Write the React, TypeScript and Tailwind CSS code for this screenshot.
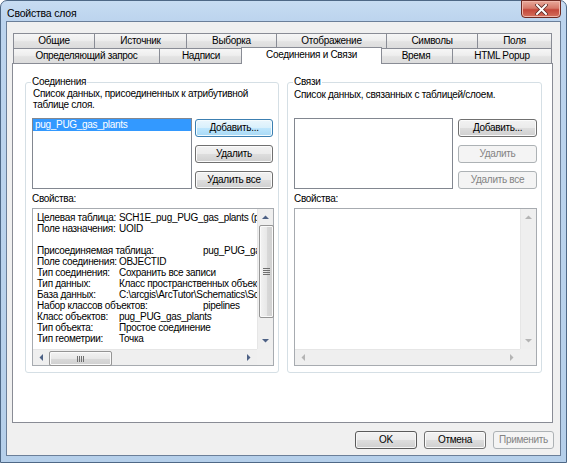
import React from "react";

type BtnKind = "normal" | "focus" | "disabled" | "default";

function Btn({ label, kind = "normal", w }: { label: string; kind?: BtnKind; w: string }) {
  let cls =
    "h-[18px] shrink-0 rounded-[3px] border flex items-center justify-center leading-[12px] ";
  if (kind === "normal")
    cls +=
      "border-[#707070] text-black bg-[linear-gradient(to_bottom,#f2f2f2_0%,#ebebeb_48%,#dddddd_52%,#cfcfcf_100%)] shadow-[inset_0_0_0_1px_#fbfbfb]";
  if (kind === "default")
    cls +=
      "border-[#5a5a5a] text-black bg-[linear-gradient(to_bottom,#f2f2f2_0%,#ebebeb_48%,#dddddd_52%,#cfcfcf_100%)] shadow-[inset_0_0_0_1px_#f6f6f6]";
  if (kind === "focus")
    cls +=
      "border-[#3c7fb1] text-black bg-[linear-gradient(to_bottom,#eaf6fd_0%,#d9f0fc_48%,#bee6fd_52%,#a7d9f5_100%)] shadow-[inset_0_0_0_1px_#f4fbfe]";
  if (kind === "disabled")
    cls += "border-[#adb2b5] text-[#838383] bg-[#f4f4f4]";
  return <div className={cls + " " + w}>{label}</div>;
}

function Arrow({ dir, disabled }: { dir: "up" | "down" | "left" | "right"; disabled?: boolean }) {
  const c = disabled ? "#b4b4b4" : "#4d6185";
  const pts =
    dir === "up"
      ? "0,4 3.5,0.5 7,4"
      : dir === "down"
      ? "0,0 3.5,3.5 7,0"
      : dir === "left"
      ? "4,0 0.5,3.5 4,7"
      : "0,0 3.5,3.5 0,7";
  const vert = dir === "up" || dir === "down";
  return (
    <svg width={vert ? 7 : 4} height={vert ? 4 : 7} viewBox={vert ? "0 0 7 4" : "0 0 4 7"}>
      <polygon points={pts} fill={c} />
    </svg>
  );
}

function VThumb() {
  return (
    <div className="w-[15px] h-[93px] ml-[1px] rounded-[2px] border border-[#959595] bg-[linear-gradient(to_right,#f3f3f3_0%,#e8e8e8_50%,#d9d9d9_51%,#d0d0d0_100%)] shadow-[inset_0_0_0_1px_#fafafa] flex items-center justify-center">
      <svg width="7" height="7" viewBox="0 0 7 7">
        <rect x="0" y="0" width="7" height="1" fill="#6f6f6f" />
        <rect x="0" y="2" width="7" height="1" fill="#6f6f6f" />
        <rect x="0" y="4" width="7" height="1" fill="#6f6f6f" />
        <rect x="0" y="6" width="7" height="1" fill="#6f6f6f" />
      </svg>
    </div>
  );
}

function HThumb() {
  return (
    <div className="w-[63px] h-[15px] mt-[1px] rounded-[2px] border border-[#959595] bg-[linear-gradient(to_bottom,#f3f3f3_0%,#e8e8e8_50%,#d9d9d9_51%,#d0d0d0_100%)] shadow-[inset_0_0_0_1px_#fafafa] flex items-center justify-center">
      <svg width="7" height="6" viewBox="0 0 7 6">
        <rect x="0" y="0" width="1" height="6" fill="#6f6f6f" />
        <rect x="2" y="0" width="1" height="6" fill="#6f6f6f" />
        <rect x="4" y="0" width="1" height="6" fill="#6f6f6f" />
        <rect x="6" y="0" width="1" height="6" fill="#6f6f6f" />
      </svg>
    </div>
  );
}

type Line = { a?: string; b?: string; wide?: boolean };

const props: Line[] = [
  { a: "Целевая таблица:", b: "SCH1E_pug_PUG_gas_plants (pug_PUG_gas_plants)" },
  { a: "Поле назначения:", b: "UOID" },
  {},
  { a: "Присоединяемая таблица:", b: "pug_PUG_gas_plants", wide: true },
  { a: "Поле соединения:", b: "OBJECTID" },
  { a: "Тип соединения:", b: "Сохранить все записи" },
  { a: "Тип данных:", b: "Класс пространственных объектов" },
  { a: "База данных:", b: "C:\\arcgis\\ArcTutor\\Schematics\\Schematics_In_ArcMap\\Pipelines.gdb" },
  { a: "Набор классов объектов:", b: "pipelines", wide: true },
  { a: "Класс объектов:", b: "pug_PUG_gas_plants" },
  { a: "Тип объекта:", b: "Простое соединение" },
  { a: "Тип геометрии:", b: "Точка" },
];

function PropsBox({ w, filled }: { w: string; filled: boolean }) {
  return (
    <div className={"h-[158px] border border-[#a7abb0] bg-white flex flex-col " + w}>
      <div className="flex h-[140px]">
        <div className="flex-1 min-w-0 overflow-hidden pl-[4px] pt-[3px] leading-[11px]">
          {filled &&
            props.map((l, i) => (
              <div key={i} className="flex h-[11px] whitespace-nowrap">
                {l.a && (
                  <span className={"shrink-0 " + (l.wide ? "w-[166px]" : "w-[82px]")}>{l.a}</span>
                )}
                {l.b && <span className="shrink-0">{l.b}</span>}
              </div>
            ))}
        </div>
        <div className="w-[16px] h-[140px] bg-[#efefef] flex flex-col border-l border-[#e6e6e6]">
          <div className="h-[16px] flex items-center justify-center">
            <Arrow dir="up" disabled={!filled} />
          </div>
          <div className="flex-1">{filled && <VThumb />}</div>
          <div className="h-[16px] flex items-center justify-center">
            <Arrow dir="down" disabled={!filled} />
          </div>
        </div>
      </div>
      <div className="flex h-[16px]">
        <div className="flex-1 bg-[#efefef] flex border-t border-[#e6e6e6]">
          <div className="w-[16px] flex items-center justify-center">
            <Arrow dir="left" disabled={!filled} />
          </div>
          <div className="flex-1">{filled && <HThumb />}</div>
          <div className="w-[16px] flex items-center justify-center">
            <Arrow dir="right" disabled={!filled} />
          </div>
        </div>
        <div className="w-[16px] bg-[#f0f0f0]" />
      </div>
    </div>
  );
}

function Tab({ label, w, first }: { label: string; w: string; first?: boolean }) {
  return (
    <div
      className={
        "h-[15px] shrink-0 border-t border-r border-[#898c95] bg-[linear-gradient(to_bottom,#f6f6f6_0%,#eeeeee_45%,#e3e3e3_55%,#dcdcdc_100%)] text-center leading-[14px] " +
        (first ? "border-l " : "") +
        w
      }
    >
      {label}
    </div>
  );
}

export default function App() {
  return (
    <div className="w-[567px] h-[463px] overflow-hidden bg-white">
      <div className="w-[567px] h-[463px] flex flex-col rounded-t-[7px] border border-[#4e6886] bg-[linear-gradient(to_bottom,#c7dcf2_0px,#bcd4ee_20px,#b9d2ec_60%,#b5cfea_100%)] font-['Liberation_Sans',Arial,sans-serif] text-[10px] tracking-[-0.3px] text-black">
        {/* title bar */}
        <div className="h-[20px] shrink-0 flex items-start">
          <div className="pl-[6px] pt-[5px] text-[10.5px] leading-[14px] tracking-[-0.2px] text-black">
            Свойства слоя
          </div>
          <div className="ml-auto mr-[5px] -mt-px w-[40px] h-[18px] rounded-b-[4px] border border-[#6e2a22] bg-[linear-gradient(to_bottom,#e9a99b_0%,#d67a6a_45%,#c4473a_55%,#d4705d_100%)] shadow-[inset_0_0_0_1px_#f0b7ab] flex items-center justify-center">
            <svg width="13" height="11" viewBox="0 0 13 11">
              <path
                d="M2 1 L11 10 M11 1 L2 10"
                stroke="#5a2a26"
                strokeWidth="3.6"
                strokeLinecap="square"
              />
              <path
                d="M2 1 L11 10 M11 1 L2 10"
                stroke="#ffffff"
                strokeWidth="2"
                strokeLinecap="square"
              />
            </svg>
          </div>
        </div>

        {/* client area */}
        <div className="ml-[5px] w-[555px] h-[435px] shrink-0 border border-[#6b7f99] bg-[#f0f0f0] flex flex-col">
          <div className="ml-[5px] mt-[11px] w-[541px] flex flex-col">
            <div className="ml-[1px] w-[539px] flex">
              <Tab label="Общие" w="w-[82px]" first />
              <Tab label="Источник" w="w-[92px]" />
              <Tab label="Выборка" w="w-[90px]" />
              <Tab label="Отображение" w="w-[110px]" />
              <Tab label="Символы" w="w-[91px]" />
              <Tab label="Поля" w="w-[74px]" />
            </div>
            <div className="ml-[1px] w-[539px] h-[15px] flex items-start">
              <Tab label="Определяющий запрос" w="w-[147px]" first />
              <Tab label="Надписи" w="w-[83px]" />
              <div className="relative z-10 -mt-[1px] -ml-[2px] -mr-[2px] w-[141px] h-[17px] shrink-0 border-t border-l border-r border-[#898c95] bg-white text-center leading-[14px]">
                Соединения и Связи
              </div>
              <Tab label="Время" w="w-[73px]" />
              <Tab label="HTML Popup" w="w-[99px]" />
            </div>
            <div className="w-[541px] h-[360px] border border-[#898c95] bg-white flex items-start pt-[18px] pl-[12px] gap-[8px]">
              {/* left group */}
              <div className="relative w-[254px] h-[291px] rounded-[3px] border border-[#d5dfe5]">
                <div className="absolute -top-[7px] left-[5px] bg-white px-[1px] leading-[12px]">
                  Соединения
                </div>
                <div className="pl-[7px] pt-[5px] leading-[11px]">
                  <div>Список данных, присоединенных к атрибутивной</div>
                  <div>таблице слоя.</div>
                </div>
                <div className="mt-[8px] pl-[6px] flex items-start">
                  <div className="w-[160px] h-[71px] border border-[#828790] bg-white">
                    <div className="h-[12px] bg-[#3399ff] text-white pl-[2px] leading-[12px]">
                      pug_PUG_gas_plants
                    </div>
                  </div>
                  <div className="ml-[3px] pt-[1px] flex flex-col gap-[8px]">
                    <Btn label="Добавить..." kind="focus" w="w-[78px]" />
                    <Btn label="Удалить" w="w-[78px]" />
                    <Btn label="Удалить все" w="w-[78px]" />
                  </div>
                </div>
                <div className="pl-[6px] mt-[4px] leading-[12px]">Свойства:</div>
                <div className="pl-[6px] mt-[3px]">
                  <PropsBox w="w-[242px]" filled />
                </div>
              </div>

              {/* right group */}
              <div className="relative w-[255px] h-[291px] rounded-[3px] border border-[#d5dfe5]">
                <div className="absolute -top-[7px] left-[5px] bg-white px-[1px] leading-[12px]">
                  Связи
                </div>
                <div className="pl-[6px] pt-[6px] leading-[11px]">
                  <div>Список данных, связанных с таблицей/слоем.</div>
                </div>
                <div className="mt-[18px] pl-[6px] flex items-start">
                  <div className="w-[159px] h-[71px] border border-[#828790] bg-white" />
                  <div className="ml-[5px] pt-[1px] flex flex-col gap-[8px]">
                    <Btn label="Добавить..." w="w-[79px]" />
                    <Btn label="Удалить" kind="disabled" w="w-[79px]" />
                    <Btn label="Удалить все" kind="disabled" w="w-[79px]" />
                  </div>
                </div>
                <div className="pl-[6px] mt-[4px] leading-[12px]">Свойства:</div>
                <div className="pl-[6px] mt-[3px]">
                  <PropsBox w="w-[243px]" filled={false} />
                </div>
              </div>
            </div>
          </div>

          {/* bottom buttons */}
          <div className="mt-[8px] pr-[6px] flex justify-end gap-[7px]">
            <Btn label="OK" kind="default" w="w-[62px]" />
            <Btn label="Отмена" w="w-[62px]" />
            <Btn label="Применить" kind="disabled" w="w-[61px]" />
          </div>
        </div>
      </div>
    </div>
  );
}
